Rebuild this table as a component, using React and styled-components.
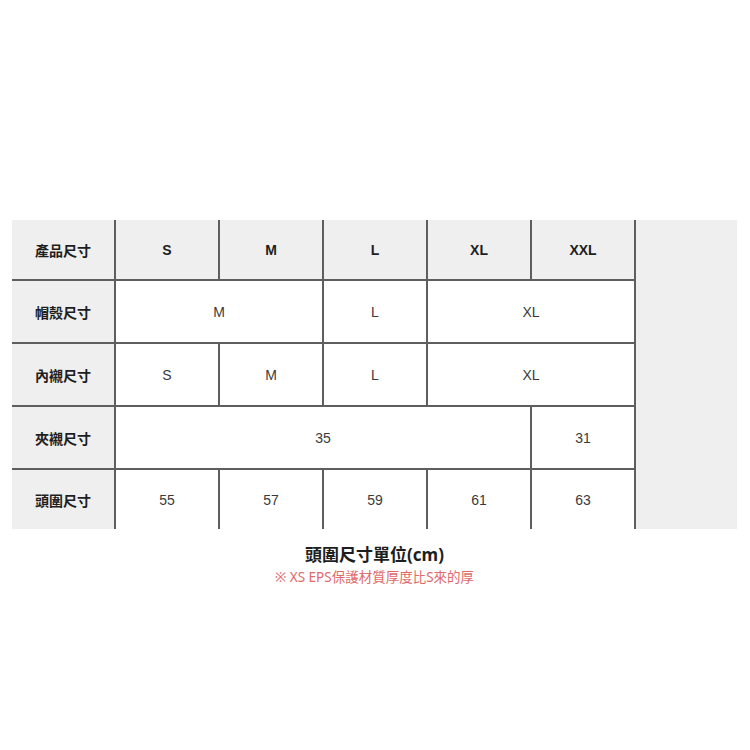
import React from 'react';
import styled, { createGlobalStyle } from 'styled-components';

const GlobalStyle = createGlobalStyle`
  html, body {
    margin: 0;
    padding: 0;
    background: #ffffff;
  }
`;

const S = {
  Page: styled.div`
    width: 750px;
    height: 750px;
    box-sizing: border-box;
    padding: 220px 13px 0 12px;
    font-family: "Liberation Sans", "Noto Sans CJK TC", sans-serif;
  `,
  Table: styled.div`
    display: grid;
    grid-template-columns: repeat(6, 102px) 1fr;
    grid-template-rows: 59px 61px 61px 61px 59px;
    gap: 2px;
    background: #5e5e5e;
  `,
  Cell: styled.div`
    display: flex;
    align-items: center;
    justify-content: center;
    font-size: 14px;
    color: ${(p) => (p.$head ? '#1e1e1e' : '#3a3a3a')};
    font-weight: ${(p) => (p.$head ? 700 : 400)};
    background: ${(p) => (p.$head ? '#efefef' : '#ffffff')};
    grid-column: span ${(p) => p.$span || 1};
  `,
  Filler: styled.div`
    grid-column: 7;
    grid-row: 1 / -1;
    background: #efefef;
  `,
  Caption: styled.div`
    display: flex;
    flex-direction: column;
    align-items: center;
    padding-top: 14px;
    font-family: "Noto Sans", "Noto Sans CJK TC", sans-serif;
  `,
  Title: styled.div`
    font-size: 17px;
    font-weight: 700;
    color: #1e1e1e;
    line-height: 24px;
  `,
  Note: styled.div`
    font-size: 13.5px;
    color: #e06a6a;
    line-height: 20px;
  `,
};

const rows = [
  { label: '產品尺寸', head: true, cells: [['S'], ['M'], ['L'], ['XL'], ['XXL']] },
  { label: '帽殼尺寸', cells: [['M', 2], ['L'], ['XL', 2]] },
  { label: '內襯尺寸', cells: [['S'], ['M'], ['L'], ['XL', 2]] },
  { label: '夾襯尺寸', cells: [['35', 4], ['31']] },
  { label: '頭圍尺寸', cells: [['55'], ['57'], ['59'], ['61'], ['63']] },
];

export default function App() {
  return (
    <>
      <GlobalStyle />
      <S.Page>
        <S.Table>
          {rows.map((row) => (
            <React.Fragment key={row.label}>
              <S.Cell $head>{row.label}</S.Cell>
              {row.cells.map(([text, span], i) => (
                <S.Cell key={i} $head={row.head} $span={span}>
                  {text}
                </S.Cell>
              ))}
            </React.Fragment>
          ))}
          <S.Filler />
        </S.Table>
        <S.Caption>
          <S.Title>頭圍尺寸單位(cm)</S.Title>
          <S.Note>※ XS EPS保護材質厚度比S來的厚</S.Note>
        </S.Caption>
      </S.Page>
    </>
  );
}
